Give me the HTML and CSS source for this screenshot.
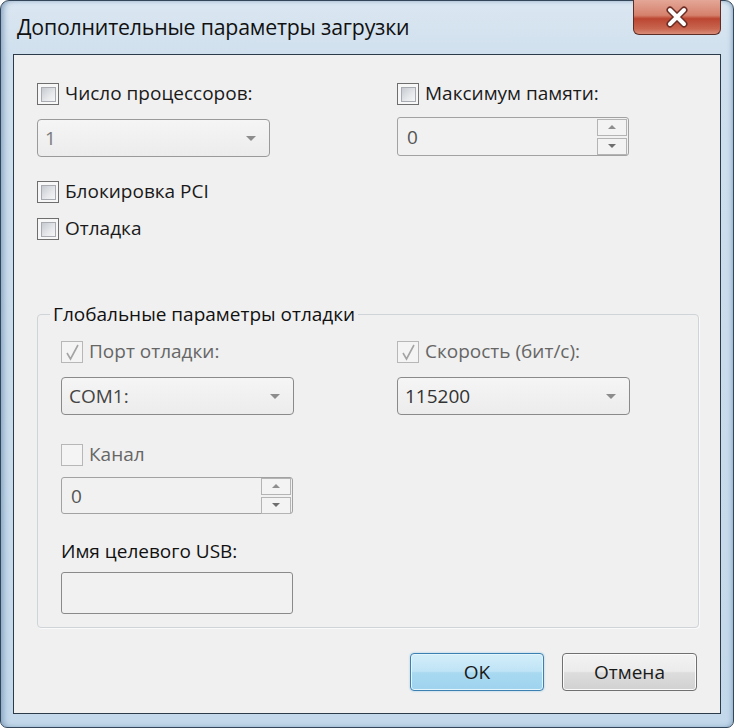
FILE: index.html
```html
<!DOCTYPE html>
<html lang="ru">
<head>
    <meta charset="UTF-8">
    <title>Дополнительные параметры загрузки</title>
    <link rel="stylesheet" href="styles.css">
</head>
<body>

    <!-- Dialog window -->
    <div class="window">
        <div class="titlebar">
            <span class="title">Дополнительные параметры загрузки</span>
            <div class="close-btn">
                <svg width="30" height="22" viewBox="0 0 30 22">
                    <path d="M8 4 L22 18 M22 4 L8 18" stroke="#6b2d24" stroke-width="7" stroke-linecap="round"/>
                    <path d="M8 4 L22 18 M22 4 L8 18" stroke="#ffffff" stroke-width="4" stroke-linecap="round"/>
                </svg>
            </div>
        </div>

        <div class="client">
            <!-- Top options -->
            <div class="columns">
                <div class="col">
                    <label class="check-row">
                        <span class="check"></span>
                        Число процессоров:
                    </label>
                    <div class="combo disabled">
                        <span>1</span>
                        <span class="arrow"></span>
                    </div>
                    <label class="check-row pci">
                        <span class="check"></span>
                        Блокировка PCI
                    </label>
                    <label class="check-row debug">
                        <span class="check"></span>
                        Отладка
                    </label>
                </div>
                <div class="col">
                    <label class="check-row">
                        <span class="check"></span>
                        Максимум памяти:
                    </label>
                    <div class="spin spin-top">
                        <span>0</span>
                        <div class="spin-buttons">
                            <span class="spin-up"></span>
                            <span class="spin-down"></span>
                        </div>
                    </div>
                </div>
            </div>

            <!-- Global debug settings -->
            <fieldset class="group">
                <legend>Глобальные параметры отладки</legend>
                <div class="group-grid">
                    <div class="col">
                        <label class="check-row muted">
                            <span class="check checked">
                                <svg width="20" height="20" viewBox="0 0 20 20"><path d="M5 11 L8.5 17 L16 3" fill="none" stroke="#a4a4a4" stroke-width="1.6"/></svg>
                            </span>
                            Порт отладки:
                        </label>
                        <div class="combo">
                            <span>COM1:</span>
                            <span class="arrow"></span>
                        </div>
                        <label class="check-row muted channel">
                            <span class="check blank"></span>
                            Канал
                        </label>
                        <div class="spin">
                            <span>0</span>
                            <div class="spin-buttons">
                                <span class="spin-up"></span>
                                <span class="spin-down"></span>
                            </div>
                        </div>
                        <div class="field-label">Имя целевого USB:</div>
                        <div class="textbox"></div>
                    </div>
                    <div class="col">
                        <label class="check-row muted">
                            <span class="check checked">
                                <svg width="20" height="20" viewBox="0 0 20 20"><path d="M5 11 L8.5 17 L16 3" fill="none" stroke="#a4a4a4" stroke-width="1.6"/></svg>
                            </span>
                            Скорость (бит/с):
                        </label>
                        <div class="combo dark">
                            <span>115200</span>
                            <span class="arrow"></span>
                        </div>
                    </div>
                </div>
            </fieldset>

            <!-- Dialog buttons -->
            <div class="buttons">
                <button class="btn btn-default">OK</button>
                <button class="btn">Отмена</button>
            </div>
        </div>
    </div>

</body>
</html>
```

FILE: styles.css
```css
/* General */
body {
    margin: 0;
    background-color: #ffffff;
    font-family: "Open Sans", "Noto Sans", sans-serif;
    color: #1a1a1a;
}

/* Window frame */
.window {
    width: 734px;
    height: 728px;
    box-sizing: border-box;
    display: flex;
    flex-direction: column;
    padding: 0 12px 13px 12px;
    border: 1px solid #34475a;
    border-radius: 9px 9px 7px 7px;
    background: linear-gradient(to bottom, #dbe7f2 0px, #cfdfed 60px, #c3d8ea 100%);
    box-shadow: inset 4px 0 6px -2px #7f9dbc, inset -3px 0 5px -2px #8aa7c4;
}

.titlebar {
    height: 53px;
    display: flex;
    justify-content: space-between;
    align-items: flex-start;
}

.title {
    font-size: 21.3px;
    padding-left: 4px;
    margin-top: 11px;
    color: #111;
    letter-spacing: -0.2px;
}

.close-btn {
    width: 86px;
    height: 34px;
    margin-top: -1px;
    border: 1px solid #5c2e26;
    border-top: none;
    border-radius: 0 0 6px 6px;
    background: linear-gradient(to bottom, #e4a797 0%, #d5806c 45%, #bb4631 55%, #c96650 85%, #d98d79 100%);
    display: flex;
    align-items: center;
    justify-content: center;
}

/* Client area */
.client {
    flex: 1;
    display: flex;
    flex-direction: column;
    border: 1px solid #2b3b4a;
    background-color: #f0f0f0;
    padding: 27px 21px 22px 23px;
    font-size: 19px;
}

.columns {
    display: grid;
    grid-template-columns: 360px 1fr;
}

.col {
    display: flex;
    flex-direction: column;
    align-items: flex-start;
}

/* Checkboxes */
.check-row {
    display: flex;
    align-items: center;
    gap: 6px;
    height: 23px;
    line-height: 23px;
}

.check {
    width: 20px;
    height: 20px;
    border: 1px solid #6e6e6e;
    background-color: #f7f7f7;
    position: relative;
    flex: none;
}

.check::before {
    content: "";
    position: absolute;
    top: 3px;
    left: 3px;
    width: 13px;
    height: 13px;
    border: 1px solid #a8acb2;
    background: linear-gradient(135deg, #c6cad0 0%, #e6e8eb 60%, #f6f6f6 100%);
}

.check svg {
    display: block;
}

.check.checked,
.check.blank {
    border-color: #b7b7b7;
    background-color: #f4f4f4;
}

.check.checked::before,
.check.blank::before {
    display: none;
}

.muted {
    color: #666;
}

.pci {
    margin-top: 23px;
}

.debug {
    margin-top: 14px;
}

.channel {
    margin-top: 28px;
}

/* Combo boxes */
.combo {
    height: 36px;
    margin-top: 14px;
    border: 1px solid #8a8a8a;
    border-radius: 4px;
    background: linear-gradient(to bottom, #f5f5f5, #ececec);
    display: flex;
    align-items: center;
    justify-content: space-between;
    padding: 0 13px 0 7px;
    box-sizing: content-box;
    width: 211px;
    color: #444;
}

.combo.disabled {
    color: #7a7a7a;
    border-color: #9a9a9a;
}

.combo.dark {
    color: #333;
}

.arrow {
    width: 0;
    height: 0;
    border-left: 5px solid transparent;
    border-right: 5px solid transparent;
    border-top: 5px solid #8c8c8c;
}

/* Spin boxes */
.spin {
    height: 37px;
    margin-top: 11px;
    border: 1px solid #a2a2a2;
    border-radius: 3px;
    background-color: #f1f1f1;
    display: flex;
    align-items: center;
    justify-content: space-between;
    padding-left: 9px;
    box-sizing: border-box;
    width: 232px;
    color: #555;
}

.spin-top {
    margin-top: 12px;
    height: 39px;
}

.spin-buttons {
    display: flex;
    flex-direction: column;
    gap: 2px;
    margin-right: 1px;
}

.spin-up,
.spin-down {
    width: 28px;
    height: 15px;
    border: 1px solid #b4b4b4;
    background-color: #f3f3f3;
    position: relative;
}

.spin-up::after,
.spin-down::after {
    content: "";
    position: absolute;
    left: 10px;
    border-left: 4px solid transparent;
    border-right: 4px solid transparent;
}

.spin-up::after {
    top: 5px;
    border-bottom: 4px solid #8e8e8e;
}

.spin-down::after {
    top: 5px;
    border-top: 4px solid #6e6e6e;
}

/* Group box */
.group {
    margin: 63px 0 0 0;
    padding: 15px 21px 13px 23px;
    border: 1px solid #cfd4d8;
    border-radius: 4px;
    box-shadow: 1px 1px 0 #fafafa;
}

.group legend {
    padding: 0 3px;
    margin-left: -11px;
    line-height: 22px;
    color: #111;
}

.group-grid {
    display: grid;
    grid-template-columns: 336px 1fr;
}

.field-label {
    margin-top: 26px;
    line-height: 23px;
    color: #111;
}

.textbox {
    width: 230px;
    height: 40px;
    margin-top: 9px;
    border: 1px solid #8a8a8a;
    border-radius: 3px;
    background-color: #f1f1f1;
}

/* Buttons */
.buttons {
    margin-top: auto;
    margin-right: 2px;
    display: flex;
    justify-content: flex-end;
    gap: 18px;
}

.btn {
    width: 135px;
    height: 38px;
    font-family: inherit;
    font-size: 19px;
    color: #1a1a1a;
    border: 1px solid #707070;
    border-radius: 4px;
    background: linear-gradient(to bottom, #f3f3f3 0%, #ebebeb 48%, #dddddd 52%, #d1d1d1 100%);
    box-shadow: inset 0 0 0 1px #fbfbfb;
}

.btn-default {
    width: 134px;
    border-color: #3c7fb1;
    background: linear-gradient(to bottom, #d4eefa 0%, #bfe4f6 48%, #a8d9f1 52%, #9fd3ee 100%);
    box-shadow: inset 0 0 0 1px #e4f5fc, 0 0 2px #8fc6e6;
}
```
